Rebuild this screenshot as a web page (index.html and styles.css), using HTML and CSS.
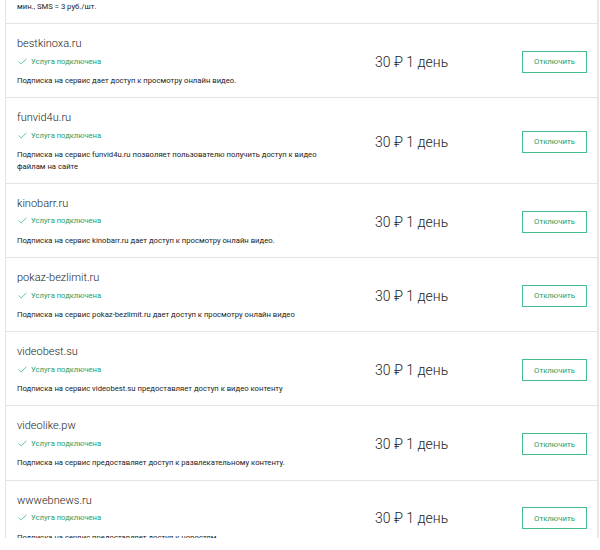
FILE: index.html
```html
<!DOCTYPE html>
<html lang="ru">
<head>
<meta charset="utf-8">
<link rel="stylesheet" href="styles.css">
</head>
<body>
<div class="list">
  <div class="tail">
    <p class="desc">мин., SMS = 3 руб./шт.</p>
  </div>

  <div class="row">
    <div class="info">
      <div class="title">bestkinoxa.ru</div>
      <div class="status"><svg class="check" viewBox="0 0 10 7" width="9" height="7"><polyline points="0.6,3.4 3.5,6.2 9.4,0.6" /></svg><span>Услуга подключена</span></div>
      <p class="desc">Подписка на сервис дает доступ к просмотру онлайн видео.</p>
    </div>
    <div class="price">30 ₽ 1 день</div>
    <button class="off">Отключить</button>
  </div>

  <div class="row">
    <div class="info">
      <div class="title">funvid4u.ru</div>
      <div class="status"><svg class="check" viewBox="0 0 10 7" width="9" height="7"><polyline points="0.6,3.4 3.5,6.2 9.4,0.6" /></svg><span>Услуга подключена</span></div>
      <p class="desc">Подписка на сервис funvid4u.ru позволяет пользователю получить доступ к видео файлам на сайте</p>
    </div>
    <div class="price">30 ₽ 1 день</div>
    <button class="off">Отключить</button>
  </div>

  <div class="row">
    <div class="info">
      <div class="title">kinobarr.ru</div>
      <div class="status"><svg class="check" viewBox="0 0 10 7" width="9" height="7"><polyline points="0.6,3.4 3.5,6.2 9.4,0.6" /></svg><span>Услуга подключена</span></div>
      <p class="desc">Подписка на сервис kinobarr.ru дает доступ к просмотру онлайн видео.</p>
    </div>
    <div class="price">30 ₽ 1 день</div>
    <button class="off">Отключить</button>
  </div>

  <div class="row">
    <div class="info">
      <div class="title">pokaz-bezlimit.ru</div>
      <div class="status"><svg class="check" viewBox="0 0 10 7" width="9" height="7"><polyline points="0.6,3.4 3.5,6.2 9.4,0.6" /></svg><span>Услуга подключена</span></div>
      <p class="desc">Подписка на сервис pokaz-bezlimit.ru дает доступ к просмотру онлайн видео</p>
    </div>
    <div class="price">30 ₽ 1 день</div>
    <button class="off">Отключить</button>
  </div>

  <div class="row">
    <div class="info">
      <div class="title">videobest.su</div>
      <div class="status"><svg class="check" viewBox="0 0 10 7" width="9" height="7"><polyline points="0.6,3.4 3.5,6.2 9.4,0.6" /></svg><span>Услуга подключена</span></div>
      <p class="desc">Подписка на сервис videobest.su предоставляет доступ к видео контенту</p>
    </div>
    <div class="price">30 ₽ 1 день</div>
    <button class="off">Отключить</button>
  </div>

  <div class="row">
    <div class="info">
      <div class="title">videolike.pw</div>
      <div class="status"><svg class="check" viewBox="0 0 10 7" width="9" height="7"><polyline points="0.6,3.4 3.5,6.2 9.4,0.6" /></svg><span>Услуга подключена</span></div>
      <p class="desc">Подписка на сервис предоставляет доступ к развлекательному контенту.</p>
    </div>
    <div class="price">30 ₽ 1 день</div>
    <button class="off">Отключить</button>
  </div>

  <div class="row">
    <div class="info">
      <div class="title">wwwebnews.ru</div>
      <div class="status"><svg class="check" viewBox="0 0 10 7" width="9" height="7"><polyline points="0.6,3.4 3.5,6.2 9.4,0.6" /></svg><span>Услуга подключена</span></div>
      <p class="desc">Подписка на сервис предоставляет доступ к новостям</p>
    </div>
    <div class="price">30 ₽ 1 день</div>
    <button class="off">Отключить</button>
  </div>
</div>
</body>
</html>
```

FILE: styles.css
```css
html, body {
  margin: 0;
  padding: 0;
  background: #fff;
}

body {
  font-family: Roboto, "Noto Sans", "DejaVu Sans", sans-serif;
  color: #333;
}

.list {
  margin-left: 5px;
  width: 591px;
  height: 538px;
  overflow: hidden;
  border-left: 1px solid #e4e4e4;
  border-right: 2px solid #e8e8e8;
}

.tail {
  padding: 1px 10px 11px 11px;
}

.tail .desc {
  margin: 0;
  line-height: 11px;
}

.row {
  display: grid;
  grid-template-columns: 1fr 147px 65px;
  align-items: center;
  padding: 13px 10px 10.7px 11px;
  border-top: 1px solid #e4e4e4;
}

.info {
  display: flex;
  flex-direction: column;
  max-width: 318px;
}

.title {
  font-size: 11px;
  font-weight: 300;
  line-height: 14px;
  color: #222;
}

.status {
  display: flex;
  align-items: center;
  gap: 4px;
  margin-top: 4px;
  height: 12px;
  font-size: 7.6px;
  color: #1e9e67;
}

.check {
  margin-left: 1px;
  fill: none;
  stroke: #3cb883;
  stroke-width: 0.9;
}

.desc {
  margin: 8px 0 0;
  font-size: 7.7px;
  line-height: 11.5px;
  color: #222;
}

.price {
  font-size: 14px;
  font-weight: 300;
  color: #222;
  white-space: nowrap;
}

.off {
  width: 65px;
  height: 22px;
  padding: 0;
  border: 1px solid #45bd8b;
  background: #fff;
  color: #1e9e67;
  font-family: Roboto, "Noto Sans", sans-serif;
  font-size: 7.8px;
  cursor: pointer;
}
```
